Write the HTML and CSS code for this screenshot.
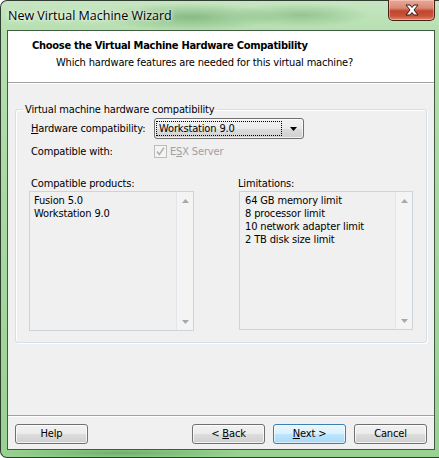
FILE: index.html
```html
<!DOCTYPE html>
<html>
<head>
<meta charset="utf-8">
<title>New Virtual Machine Wizard</title>
<link rel="stylesheet" href="styles.css">
</head>
<body>
<div class="window">
  <div class="titlebar">
    <span class="title">New Virtual Machine Wizard</span>
    <div class="close">
      <svg width="16" height="12" viewBox="0 0 16 12">
        <path d="M2 1 L6 1 L8 3.5 L10 1 L14 1 L10 6 L14 11 L10 11 L8 8.5 L6 11 L2 11 L6 6 Z" fill="#fff" stroke="#3b1410" stroke-width="1" stroke-linejoin="round"/>
      </svg>
    </div>
  </div>
  <div class="client">
    <div class="header">
      <div class="h-title">Choose the Virtual Machine Hardware Compatibility</div>
      <div class="h-sub">Which hardware features are needed for this virtual machine?</div>
    </div>
    <div class="content">
      <fieldset class="group">
        <legend class="legend">Virtual machine hardware compatibility</legend>
        <div class="row row-hw">
          <span class="lbl"><u>H</u>ardware compatibility:</span>
          <div class="combo">
            <span class="combo-text">Workstation 9.0</span>
            <svg class="combo-arrow" width="7" height="4" viewBox="0 0 7 4"><path d="M0 0 H7 L3.5 4 Z" fill="#000"/></svg>
          </div>
        </div>
        <div class="row row-cw">
          <span class="lbl">Compatible with:</span>
          <span class="check">
            <svg width="11" height="11" viewBox="0 0 11 11"><path d="M2 5.5 L4.3 8.5 L9 1.8" fill="none" stroke="#b2b2b2" stroke-width="1.6"/></svg>
          </span>
          <span class="disabled">E<u>S</u>X Server</span>
        </div>
        <div class="lists">
          <div class="col col-left">
            <div class="col-lbl">Compatible products:</div>
            <div class="listbox">
              <div class="items">
                <div>Fusion 5.0</div>
                <div>Workstation 9.0</div>
              </div>
              <div class="scroll">
                <svg width="7" height="4" viewBox="0 0 7 4"><path d="M0 4 H7 L3.5 0 Z" fill="#a8a8a8"/></svg>
                <svg width="7" height="4" viewBox="0 0 7 4"><path d="M0 0 H7 L3.5 4 Z" fill="#a8a8a8"/></svg>
              </div>
            </div>
          </div>
          <div class="col col-right">
            <div class="col-lbl">Limitations:</div>
            <div class="listbox">
              <div class="items">
                <div>64 GB memory limit</div>
                <div>8 processor limit</div>
                <div>10 network adapter limit</div>
                <div>2 TB disk size limit</div>
              </div>
              <div class="scroll">
                <svg width="7" height="4" viewBox="0 0 7 4"><path d="M0 4 H7 L3.5 0 Z" fill="#a8a8a8"/></svg>
                <svg width="7" height="4" viewBox="0 0 7 4"><path d="M0 0 H7 L3.5 4 Z" fill="#a8a8a8"/></svg>
              </div>
            </div>
          </div>
        </div>
      </fieldset>
    </div>
    <div class="footer">
      <button class="btn">Help</button>
      <div class="spacer"></div>
      <button class="btn">&lt; <u>B</u>ack</button>
      <button class="btn btn-default"><u>N</u>ext &gt;</button>
      <button class="btn">Cancel</button>
    </div>
  </div>
</div>
</body>
</html>
```

FILE: styles.css
```css
* { box-sizing: border-box; }
html, body { margin: 0; padding: 0; background: #ffffff; }
body {
  font-family: "DejaVu Sans Condensed", "DejaVu Sans", sans-serif;
  font-size: 11px;
  line-height: 13px;
  letter-spacing: -0.15px;
  color: #000;
}
.window {
  width: 439px;
  height: 458px;
  border: 1px solid #2e3d2f;
  border-right: none;
  border-radius: 7px 0 0 7px;
  padding-left: 6px;
  background:
    radial-gradient(ellipse 90px 14px at 190px 16px, rgba(70,140,70,0.45), rgba(70,140,70,0) 100%),
    radial-gradient(ellipse 70px 12px at 300px 14px, rgba(70,140,70,0.35), rgba(70,140,70,0) 100%),
    radial-gradient(ellipse 120px 6px at 120px 452px, rgba(60,130,60,0.45), rgba(60,130,60,0) 100%),
    linear-gradient(to bottom, #c6e6c1 0px, #b6dfb0 30px, #a9d9a2 200px, #98d291 458px);
  display: flex;
  flex-direction: column;
}
.titlebar {
  height: 29px;
  display: flex;
  align-items: flex-start;
  position: relative;
}
.title {
  font-family: "Open Sans", "Noto Sans", sans-serif;
  font-size: 12.5px;
  letter-spacing: 0;
  line-height: 16px;
  margin-top: 7px;
  margin-left: 1px;
  color: #000;
  text-shadow: 0 0 6px rgba(255,255,255,0.9), 0 0 3px rgba(255,255,255,0.9);
}
.close {
  position: absolute;
  top: -1px;
  left: 381px;
  width: 47px;
  height: 21px;
  border: 1px solid #4a1f18;
  border-top: none;
  border-radius: 0 0 5px 5px;
  background: linear-gradient(to bottom, #e8a998 0%, #d98a74 40%, #c2462c 55%, #c8523a 80%, #df8a6c 100%);
  box-shadow: inset 0 0 0 1px rgba(255,220,210,0.45);
  display: flex;
  align-items: center;
  justify-content: center;
}
.client {
  width: 428px;
  height: 420px;
  border: 1px solid #3f5c40;
  background: #f0f0f0;
  display: flex;
  flex-direction: column;
}
.header {
  height: 52px;
  background: #ffffff;
  border-bottom: 1px solid #a0a0a0;
  padding: 8px 0 0 24px;
  flex: none;
}
.h-title { font-weight: bold; letter-spacing: -0.28px; }
.h-sub { margin-top: 4px; padding-left: 24px; letter-spacing: -0.17px; }
.content {
  flex: 1;
  border-top: 1px solid #ffffff;
  padding: 19px 7px 0 7px;
}
.group {
  margin: 0;
  width: 412px;
  height: 240px;
  border: 1px solid #d5dfe5;
  border-radius: 3px;
  box-shadow: inset 1px 1px 0 #ffffff, 1px 1px 0 #ffffff;
  padding: 0 0 0 15px;
}
.legend {
  margin-left: -8px;
  padding: 0 2px;
  line-height: 13px;
}
.row {
  display: flex;
  align-items: center;
}
.lbl { width: 123px; }
.row-hw { margin-top: 2px; height: 21px; }
.combo {
  width: 150px;
  height: 21px;
  border: 1px solid #707070;
  border-radius: 3px;
  background: linear-gradient(to bottom, #f2f2f2 0%, #ebebeb 50%, #dddddd 51%, #cfcfcf 100%);
  box-shadow: inset 0 0 0 1px rgba(255,255,255,0.7);
  display: flex;
  align-items: center;
  padding: 0 6px 0 1px;
}
.combo-text {
  flex: 1;
  height: 15px;
  line-height: 13px;
  padding-left: 2px;
  outline: 1px dotted #000;
  outline-offset: -1px;
  border: 1px solid transparent;
  margin-right: 8px;
}
.row-cw { margin-top: 5px; height: 14px; }
.check {
  width: 13px;
  height: 13px;
  border: 1px solid #bcbcbc;
  background: #f4f4f4;
  display: flex;
  align-items: center;
  justify-content: center;
  margin-right: 3px;
}
.disabled { color: #a0a0a0; }
.lists {
  display: flex;
  margin-top: 19px;
}
.col { display: flex; flex-direction: column; }
.col-left { margin-left: -2px; width: 165px; }
.col-left .col-lbl { padding-left: 2px; }
.col-right { margin-left: 45px; width: 174px; }
.col-right .col-lbl { margin-left: -1px; }
.col-lbl { height: 13px; margin-bottom: 1px; }
.listbox {
  height: 140px;
  border: 1px solid #cdd5dc;
  background: #f0f0f0;
  display: flex;
}
.items {
  flex: 1;
  padding: 2px 0 0 4px;
}
.col-right .items { padding-left: 5px; }
.scroll {
  width: 17px;
  border-left: 1px solid #e2e6ea;
  background: #f4f4f4;
  display: flex;
  flex-direction: column;
  justify-content: space-between;
  align-items: center;
  padding: 7px 0 6px 0;
}
.col-right .listbox { height: 139px; }
.footer {
  height: 34px;
  flex: none;
  border-top: 1px solid #a0a0a0;
  box-shadow: inset 0 1px 0 #ffffff;
  display: flex;
  gap: 8px;
  padding: 8px 7px 0 7px;
}
.spacer { flex: 1; }
.btn {
  width: 73px;
  height: 20px;
  font: inherit;
  letter-spacing: inherit;
  color: #000;
  border: 1px solid #707070;
  border-radius: 3px;
  background: linear-gradient(to bottom, #f2f2f2 0%, #ebebeb 50%, #dddddd 51%, #cfcfcf 100%);
  box-shadow: inset 0 0 0 1px rgba(255,255,255,0.75);
  padding: 0;
  line-height: 16px;
}
.btn-default {
  border-color: #3c7fb1;
  background: linear-gradient(to bottom, #eaf6fd 0%, #d9f0fc 50%, #bee6fd 51%, #a7d9f5 100%);
  box-shadow: inset 0 0 0 1px rgba(255,255,255,0.6);
}
u { text-decoration: underline; }
```
